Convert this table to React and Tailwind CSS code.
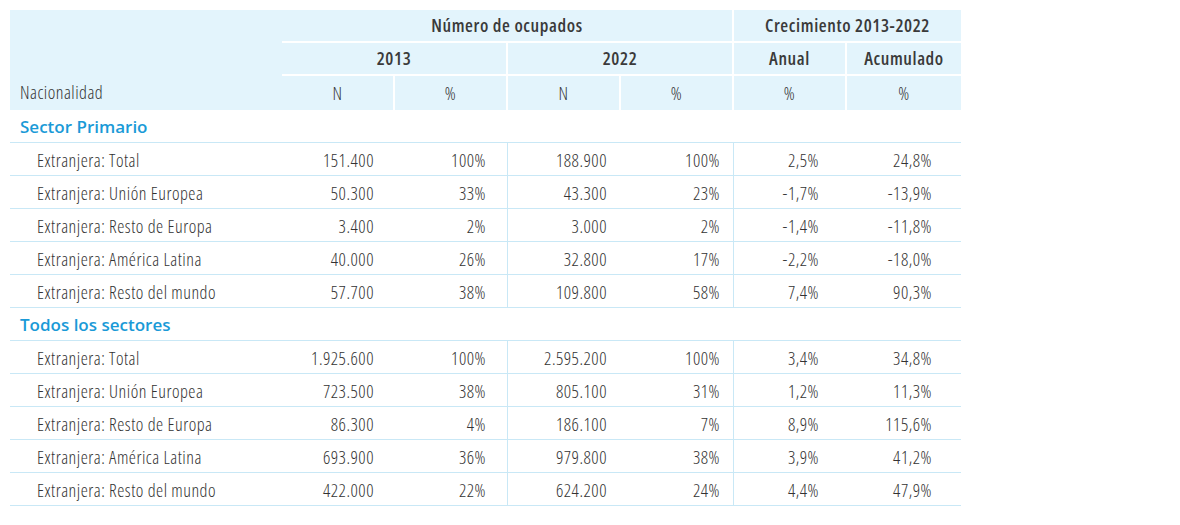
import React from "react";

const sections = [
  {
    title: "Sector Primario",
    rows: [
      ["Extranjera: Total", "151.400", "100%", "188.900", "100%", "2,5%", "24,8%"],
      ["Extranjera: Unión Europea", "50.300", "33%", "43.300", "23%", "-1,7%", "-13,9%"],
      ["Extranjera: Resto de Europa", "3.400", "2%", "3.000", "2%", "-1,4%", "-11,8%"],
      ["Extranjera: América Latina", "40.000", "26%", "32.800", "17%", "-2,2%", "-18,0%"],
      ["Extranjera: Resto del mundo", "57.700", "38%", "109.800", "58%", "7,4%", "90,3%"],
    ],
  },
  {
    title: "Todos los sectores",
    rows: [
      ["Extranjera: Total", "1.925.600", "100%", "2.595.200", "100%", "3,4%", "34,8%"],
      ["Extranjera: Unión Europea", "723.500", "38%", "805.100", "31%", "1,2%", "11,3%"],
      ["Extranjera: Resto de Europa", "86.300", "4%", "186.100", "7%", "8,9%", "115,6%"],
      ["Extranjera: América Latina", "693.900", "36%", "979.800", "38%", "3,9%", "41,2%"],
      ["Extranjera: Resto del mundo", "422.000", "22%", "624.200", "24%", "4,4%", "47,9%"],
    ],
  },
];

const light = "font-['Open_Sans',sans-serif] [font-stretch:75%] font-light text-[18px] tracking-[0.5px] text-[#333333]";
const bold = "font-['Open_Sans',sans-serif] [font-stretch:75%] font-semibold text-[18px] tracking-[0.6px] text-[#3a3a3a]";

function DataRow({ r }) {
  return (
    <div className={`flex h-[33px] border-b border-[#c9e8f6] ${light}`}>
      <div className="w-[272px] flex items-center pl-[27px] pt-[2px]">{r[0]}</div>
      <div className="w-[113px] flex items-center justify-end pr-[21px] pt-[2px]">{r[1]}</div>
      <div className="w-[113px] flex items-center justify-end pr-[21px] pt-[2px] border-r border-[#c9e8f6]">{r[2]}</div>
      <div className="w-[113px] flex items-center justify-end pr-[14px] pt-[2px]">{r[3]}</div>
      <div className="w-[113px] flex items-center justify-end pr-[13px] pt-[2px] border-r border-[#c9e8f6]">{r[4]}</div>
      <div className="w-[113px] flex items-center justify-end pr-[28px] pt-[2px]">{r[5]}</div>
      <div className="w-[114px] flex items-center justify-end pr-[29px] pt-[2px]">{r[6]}</div>
    </div>
  );
}

function SectionRow({ title }) {
  return (
    <div className="flex h-[33px] border-b border-[#c9e8f6] items-center pl-[10px] pt-[1px]">
      <span className="font-['Open_Sans',sans-serif] font-semibold text-[17px] text-[#1a9ad7]">{title}</span>
    </div>
  );
}

export default function App() {
  const hb = `bg-[#e3f4fc] flex items-center justify-center`;
  return (
    <div className="w-[1180px] h-[525px] bg-white pt-[10px] pl-[10px]">
      <div className="w-[951px]">
        <div className="grid grid-cols-[272px_113px_113px_113px_113px_113px_114px] grid-rows-[33px_33px_34px]">
          <div className={`${hb} ${light} row-span-3 !justify-start !items-end pl-[10px] pb-[4px]`}>Nacionalidad</div>
          <div className={`${hb} ${bold} col-span-4 border-b-2 border-r-2 border-white`}>Número de ocupados</div>
          <div className={`${hb} ${bold} col-span-2 border-b-2 border-white`}>Crecimiento 2013-2022</div>
          <div className={`${hb} ${bold} col-span-2 border-b-2 border-r-2 border-white`}>2013</div>
          <div className={`${hb} ${bold} col-span-2 border-b-2 border-r-2 border-white`}>2022</div>
          <div className={`${hb} ${bold} border-b-2 border-r-2 border-white`}>Anual</div>
          <div className={`${hb} ${bold} border-b-2 border-white`}>Acumulado</div>
          <div className={`${hb} ${light} border-r-2 border-white`}>N</div>
          <div className={`${hb} ${light} border-r-2 border-white`}>%</div>
          <div className={`${hb} ${light} border-r-2 border-white`}>N</div>
          <div className={`${hb} ${light} border-r-2 border-white`}>%</div>
          <div className={`${hb} ${light} border-r-2 border-white`}>%</div>
          <div className={`${hb} ${light}`}>%</div>
        </div>
        {sections.map((s) => (
          <div key={s.title}>
            <SectionRow title={s.title} />
            {s.rows.map((r) => (
              <DataRow key={r[0]} r={r} />
            ))}
          </div>
        ))}
      </div>
    </div>
  );
}
